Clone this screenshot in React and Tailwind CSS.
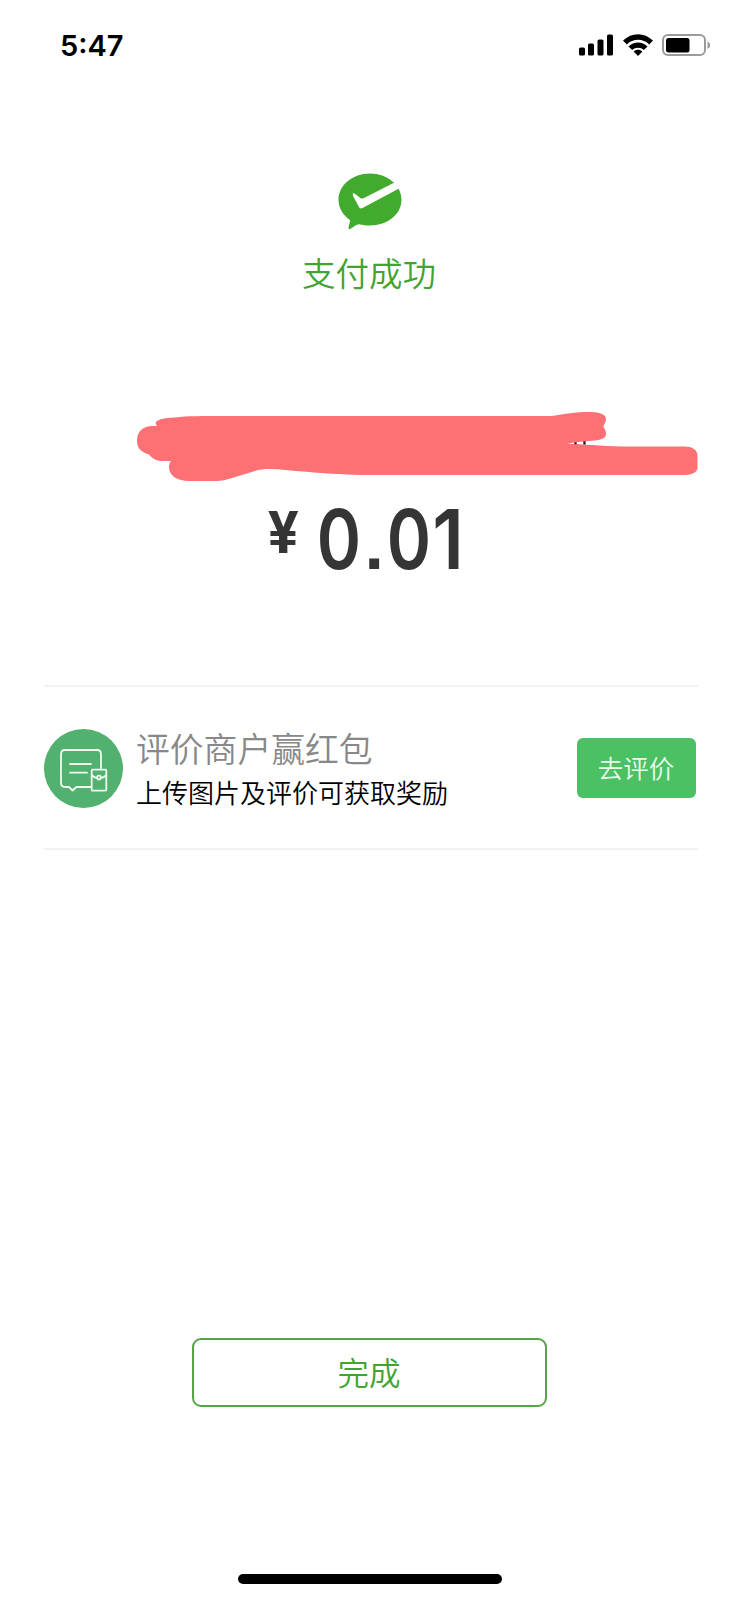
const StatusBar = () => {
  return (
    <div className="flex h-[90px] items-center justify-between pl-[60px] pr-[27px]">
      <span className="font-['Inter',sans-serif] text-[29px] leading-none font-semibold text-black">
        5:47
      </span>

      <div className="flex items-center gap-[9px]">
        <svg width="35" height="22" viewBox="0 0 35 22">
          <rect x="0" y="13.5" width="6" height="8" rx="1.6" />
          <rect x="9" y="9.5" width="6" height="12" rx="1.6" />
          <rect x="18.5" y="5.5" width="6" height="16" rx="1.6" />
          <rect x="28" y="0.5" width="6" height="21" rx="1.6" />
        </svg>

        <svg width="30" height="22" viewBox="0 0 30 22">
          <path d="M0 6.6C8.5 -2 21.5 -2 30 6.6L26.2 10.4C20 4.3 10 4.3 3.8 10.4Z" />
          <path d="M5.5 12.6C11 7 19 7 24.5 12.6L20.8 16C17.5 12.9 12.5 12.9 9.2 16Z" />
          <path d="M10.6 17.6C13 15.2 17 15.2 19.4 17.6L15 22Z" />
        </svg>

        <svg width="49" height="22" viewBox="0 0 49 22">
          <rect
            x="1"
            y="1"
            width="42"
            height="20"
            rx="5"
            fill="none"
            stroke="#9b9b9b"
            strokeWidth="2"
          />
          <rect x="4" y="4" width="23.5" height="14.5" rx="2.5" />
          <path d="M45.5 7.5C49 9 49 13.5 45.5 15Z" fill="#9b9b9b" />
        </svg>
      </div>
    </div>
  );
};

const PayLogo = () => (
  <svg className="ml-px" width="64" height="57" viewBox="0 0 64 57">
    <path
      d="M32 0.5C49.4 0.5 63.5 12.2 63.5 26.8C63.5 41.4 49.4 52.5 32 52.5C28.2 52.5 24.500 52 21.200 51.200C18 51.500 15 54 12.500 55.800C11.200 56.600 10.300 56 10.500 54.500L12.200 47.200C5 42.400 0.500 35 0.500 26.800C0.500 12.200 14.600 0.500 32 0.500Z"
      fill="#42ab2d"
    />
    <path
      d="M14.700 20.300C16.500 20 18 21.500 22.200 25C23.200 25.700 24.300 25.800 25.500 25.200L57 9.300L61 15.500L24.500 34.900C22.800 35.800 21.700 35.400 21 34L15 23Z"
      fill="#fff"
    />
    <path d="M56 9.800L60 8L64 6V13L60.700 15.600Z" fill="#fff" />
  </svg>
);

// marker strokes over the merchant name
const Scribble = () => (
  <svg width="738" height="80" viewBox="0 405 738 80">
    <path
      d="M157 426C153 422 158 419 168 418C185 416.2 195 416 215 416H552C565 414 575 412 590 412C601 412 606 415 606 419C606 423 603 425 603.5 427C605 429 606 431 606 434C606 438 601 440 595 440.5C585 441 577 442 567 443.5C590 445 610 446.5 630 446.5H684C693 446.5 698 450 697.5 457V467C698 472 692 475 685 475H370C340 475 315 472.5 285 470C274 468.8 262 468.5 255 471L232 478C226 480 221 481 217 481H189C178 481 169 476 169 467C169 464 170 462 171 461H162C155 461 152 458 149 454.5C141 452 137 448 137 441C137 432 142 427 151 426Z"
      fill="#fd7074"
    />
    <path d="M575.500 442.300V444.300M584.500 441.200V444.600" stroke="#222" strokeWidth="2.400" />
  </svg>
);

const Amount = () => (
  <div className="flex h-[200px] items-start pt-[12px] pl-[268px] text-[#353535]">
    <span className="origin-left scale-x-95 pt-[6px] font-['Roboto',sans-serif] text-[60px] leading-[60px] font-bold">
      ¥
    </span>
    <div className="ml-[16px] flex font-['Inter',sans-serif] text-[83px] leading-[84px] font-semibold">
      <span className="flex w-[46px] scale-x-[0.81] justify-center">0</span>
      <span className="flex w-[24px] justify-center pt-[6px] font-['Liberation_Sans',sans-serif] text-[70px] font-bold">
        .
      </span>
      <span className="flex w-[46px] scale-x-[0.81] justify-center">0</span>
      <span className="flex w-[32px] scale-x-90 justify-center">1</span>
    </div>
  </div>
);

const ReviewIcon = () => (
  <svg
    className="mt-px"
    width="79"
    height="79"
    viewBox="0 0 79 79"
    fill="none"
    stroke="#effaf1"
    strokeWidth="1.8"
    strokeLinecap="round"
    strokeLinejoin="round"
  >
    <circle cx="39.5" cy="39.5" r="39.5" fill="#52b16e" stroke="none" />
    <path d="M57 39V25C57 22.5 55.5 21 53 21H21C18.5 21 17 22.5 17 25V54C17 56.5 18.5 58 21 58H25L28.5 61.5L32.5 58H47" />
    <path d="M26 35H47M26 43.7H43" />
    <rect x="47.7" y="40.7" width="14.6" height="21" rx="1" />
    <path d="M48 46.5C50 48.3 51.5 48.8 53 48.8M57 48.8C58.5 48.8 60 48.3 62 46.5" />
    <circle cx="55" cy="48.6" r="1.9" />
  </svg>
);

const App = () => {
  return (
    <div className="flex h-[1600px] w-[738px] flex-col bg-white font-['Noto_Sans_CJK_SC',sans-serif]">
      <StatusBar />

      <div className="flex h-[315px] flex-col items-center pt-[83px]">
        <PayLogo />
        <h1 className="mt-[18px] text-[33.5px] leading-[48px] font-[350] text-[#42a332]">
          支付成功
        </h1>
      </div>

      <Scribble />

      <Amount />

      <div className="mr-[40px] ml-[43.5px] flex h-[165px] items-center border-y-2 border-[#f2f2f2] pr-[2.5px]">
        <ReviewIcon />
        <div className="ml-[13.5px] flex-1 pt-px">
          <p className="text-[33.8px] leading-[47px] font-[350] text-[#888]">
            评价商户赢红包
          </p>
          <p className="text-[26px] leading-[42px] font-[350] text-black">
            上传图片及评价可获取奖励
          </p>
        </div>
        <button className="h-[60px] w-[119px] rounded-md bg-[#4bc164] text-[25.5px] font-[350] text-[#e9fbec]">
          去评价
        </button>
      </div>

      <div className="mt-[488px] flex justify-center">
        <button className="h-[69px] w-[355px] rounded-[9px] border-2 border-[#55a545] pb-[2px] text-[31.5px] font-[350] text-[#42a332]">
          完成
        </button>
      </div>

      <div className="mt-auto mb-[16px] ml-[238px] h-[10px] w-[264px] rounded-full bg-black" />
    </div>
  );
};

export default App;
